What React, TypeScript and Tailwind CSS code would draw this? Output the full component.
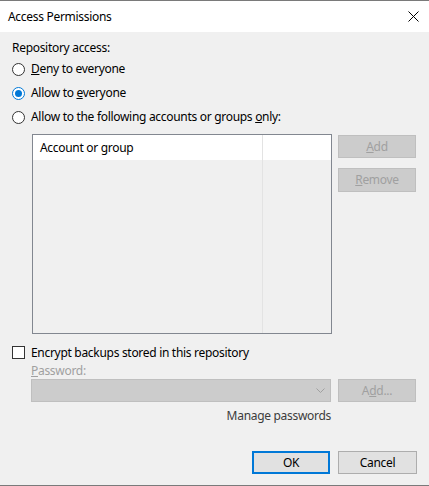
import React from "react";

const font = { fontFamily: '"Noto Sans", "Liberation Sans", Arial, sans-serif' };

function Radio({ checked, children }: { checked?: boolean; children: React.ReactNode }) {
  return (
    <div className="flex h-[24px] items-center">
      <div
        className={`flex h-[13px] w-[13px] items-center justify-center rounded-full border bg-white ${
          checked ? "border-[#0078d7]" : "border-[#333333]"
        }`}
      >
        {checked && <div className="h-[7px] w-[7px] rounded-full bg-[#0078d7]" />}
      </div>
      <span className="ml-[6px] text-[12px] leading-[16px] text-black">{children}</span>
    </div>
  );
}

function DisabledButton({ children, className = "" }: { children: React.ReactNode; className?: string }) {
  return (
    <div
      className={`flex w-[78px] items-center justify-center border border-[#bfbfbf] bg-[#cccccc] text-[12px] text-[#a0a0a0] ${className}`}
    >
      {children}
    </div>
  );
}

export default function App() {
  return (
    <div
      className="flex h-[486px] w-[429px] flex-col border-y border-[#7a7a7a] bg-[#f0f0f0] tracking-[-0.3px]"
      style={font}
    >
      {/* Title bar */}
      <div className="flex h-[31px] items-center justify-between bg-white pl-[8px] pr-[10px]">
        <span className="text-[12px] leading-[16px] text-black">Access Permissions</span>
        <svg width="11" height="11" viewBox="0 0 11 11">
          <path d="M0.5 0.5 L10.5 10.5 M10.5 0.5 L0.5 10.5" stroke="#000" strokeWidth="1" />
        </svg>
      </div>

      {/* Body */}
      <div className="flex flex-1 flex-col pl-[12px] pr-[12px] pt-[8px]">
        <div className="text-[12px] leading-[16px] text-black">Repository access:</div>
        <div className="mt-[1px] flex flex-col">
          <Radio>
            <u>D</u>eny to everyone
          </Radio>
          <Radio checked>
            Allow to <u>e</u>veryone
          </Radio>
          <Radio>
            Allow to the following accounts or groups <u>o</u>nly:
          </Radio>
        </div>

        <div className="mt-[5px] flex">
          <div className="ml-[20px] flex h-[200px] w-[300px] border border-[#828790] bg-[#f0f0f0]">
            <div className="flex w-[230px] flex-col border-r border-[#e3e3e3]">
              <div className="flex h-[25px] items-center bg-white pl-[7px] text-[12px] text-black">
                Account or group
              </div>
            </div>
            <div className="flex flex-1 flex-col">
              <div className="h-[25px] bg-white" />
            </div>
          </div>
          <div className="ml-[6px] flex flex-col pt-[1px]">
            <DisabledButton className="h-[23px]">
              <u>A</u>dd
            </DisabledButton>
            <DisabledButton className="mt-[10px] h-[24px]">
              <u>R</u>emove
            </DisabledButton>
          </div>
        </div>

        <div className="mt-[12px] flex h-[13px] items-center">
          <div className="h-[13px] w-[13px] border border-[#333333] bg-white" />
          <span className="ml-[6px] text-[12px] leading-[16px] text-black">
            Encrypt backups stored in this repository
          </span>
        </div>

        <div className="ml-[19px] mt-[4px] text-[12px] leading-[16px] text-[#a0a0a0]">
          <u>P</u>assword:
        </div>

        <div className="ml-[19px] flex">
          <div className="flex h-[23px] w-[300px] items-center justify-end border border-[#bfbfbf] bg-[#cccccc] pr-[5px]">
            <svg width="9" height="6" viewBox="0 0 9 6">
              <path d="M0.5 0.5 L4.5 4.5 L8.5 0.5" stroke="#a0a0a0" strokeWidth="1" fill="none" />
            </svg>
          </div>
          <DisabledButton className="ml-[7px] h-[23px]">
            A<u>d</u>d...
          </DisabledButton>
        </div>

        <div className="mt-[6px] flex w-[319px] justify-end text-[12px] leading-[16px] text-[#3c3c3c]">
          Manage passwords
        </div>

        <div className="mt-[27px] flex justify-end gap-[8px]">
          <div className="flex h-[23px] w-[78px] items-center justify-center border-2 border-[#0078d7] bg-[#e1e1e1] text-[12px] text-black">
            OK
          </div>
          <div className="flex h-[23px] w-[79px] items-center justify-center border border-[#adadad] bg-[#e1e1e1] text-[12px] text-black">
            Cancel
          </div>
        </div>
      </div>
    </div>
  );
}
